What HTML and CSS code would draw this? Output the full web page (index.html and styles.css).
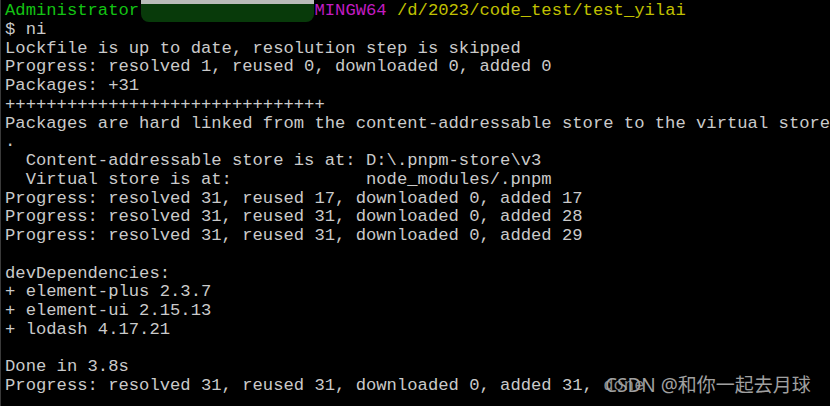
FILE: index.html
```html
<!DOCTYPE html>
<html>
<head>
<meta charset="utf-8">
<link rel="stylesheet" href="styles.css">
</head>
<body>
<div class="term">
<div class="blur"></div>
<pre class="out"><span class="green">Administrator</span>                 <span class="magenta">MINGW64</span> <span class="yellow">/d/2023/code_test/test_yilai</span>
$ ni
Lockfile is up to date, resolution step is skipped
Progress: resolved 1, reused 0, downloaded 0, added 0
Packages: +31
+++++++++++++++++++++++++++++++
Packages are hard linked from the content-addressable store to the virtual store
.
  Content-addressable store is at: D:\.pnpm-store\v3
  Virtual store is at:             node_modules/.pnpm
Progress: resolved 31, reused 17, downloaded 0, added 17
Progress: resolved 31, reused 31, downloaded 0, added 28
Progress: resolved 31, reused 31, downloaded 0, added 29

devDependencies:
+ element-plus 2.3.7
+ element-ui 2.15.13
+ lodash 4.17.21

Done in 3.8s
Progress: resolved 31, reused 31, downloaded 0, added 31, <span class="dim">done</span></pre>
<div class="watermark">CSDN @和你一起去月球</div>
</div>
</body>
</html>
```

FILE: styles.css
```css
html, body {
  margin: 0;
  padding: 0;
  background: #000;
}
.term {
  position: relative;
  width: 830px;
  height: 406px;
  background: #000;
  overflow: hidden;
  border-left: 1px solid #3a3a3a;
  box-sizing: border-box;
}
.out {
  margin: 0;
  padding: 2px 0 0 4px;
  font-family: "Liberation Mono", "DejaVu Sans Mono", monospace;
  font-size: 17.2px;
  line-height: 18.75px;
  color: #cacaca;
  white-space: pre;
}
.green { color: #13c213; }
.magenta { color: #c21cc2; }
.yellow { color: #c0c000; }
.dim { color: #8a8a8a; }
.blur {
  position: absolute;
  left: 140px;
  top: 0;
  width: 173px;
  height: 22px;
  background: #083a0a;
  border-radius: 0 0 8px 8px;
  border-top: 4px solid #b9bcb9;
  box-sizing: border-box;
}
.watermark {
  position: absolute;
  left: 604px;
  top: 373px;
  font-family: "Noto Sans", "Noto Sans CJK SC", sans-serif;
  font-size: 19px;
  line-height: 24px;
  color: #a0a0a0;
  white-space: nowrap;
}
```
